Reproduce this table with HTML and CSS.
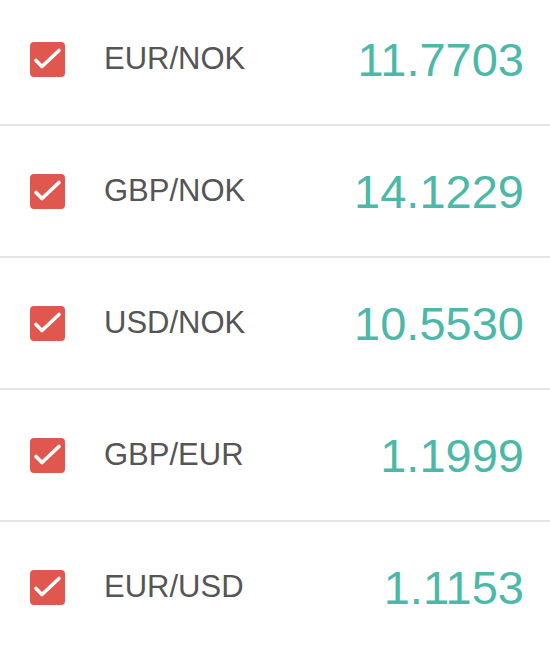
FILE: index.html
```html
<!DOCTYPE html>
<html lang="en">
<head>
<meta charset="utf-8">
<title>Rates</title>
<link rel="stylesheet" href="styles.css">
</head>
<body>
<ul class="rates">
  <li class="rate">
    <span class="check"><svg viewBox="0 0 35 35" width="35" height="35"><path d="M6 18.5 L12 24.5 L29 8.5" /></svg></span>
    <span class="pair">EUR/NOK</span>
    <span class="value">11.7703</span>
  </li>
  <li class="rate">
    <span class="check"><svg viewBox="0 0 35 35" width="35" height="35"><path d="M6 18.5 L12 24.5 L29 8.5" /></svg></span>
    <span class="pair">GBP/NOK</span>
    <span class="value">14.1229</span>
  </li>
  <li class="rate">
    <span class="check"><svg viewBox="0 0 35 35" width="35" height="35"><path d="M6 18.5 L12 24.5 L29 8.5" /></svg></span>
    <span class="pair">USD/NOK</span>
    <span class="value">10.5530</span>
  </li>
  <li class="rate">
    <span class="check"><svg viewBox="0 0 35 35" width="35" height="35"><path d="M6 18.5 L12 24.5 L29 8.5" /></svg></span>
    <span class="pair">GBP/EUR</span>
    <span class="value">1.1999</span>
  </li>
  <li class="rate">
    <span class="check"><svg viewBox="0 0 35 35" width="35" height="35"><path d="M6 18.5 L12 24.5 L29 8.5" /></svg></span>
    <span class="pair">EUR/USD</span>
    <span class="value">1.1153</span>
  </li>
</ul>
</body>
</html>
```
FILE: styles.css
```css
html, body {
  margin: 0;
  padding: 0;
  background: #ffffff;
  font-family: "Liberation Sans", Arial, sans-serif;
  overflow: hidden;
}
.rates {
  list-style: none;
  margin: -6px 0 0 0;
  padding: 0;
}
.rate {
  display: flex;
  align-items: center;
  height: 130px;
  border-bottom: 2px solid #e6e6e6;
  padding: 0 26px 0 30px;
}
.check {
  width: 35px;
  height: 35px;
  border-radius: 4px;
  background: #e0574f;
  display: flex;
  flex: none;
}
.check svg path {
  fill: none;
  stroke: #ffffff;
  stroke-width: 3.6;
  stroke-linecap: round;
  stroke-linejoin: round;
}
.pair {
  margin-left: 39px;
  font-size: 31px;
  color: #555555;
  flex: 1;
}
.value {
  font-size: 47px;
  color: #4cb8a7;
}
```
